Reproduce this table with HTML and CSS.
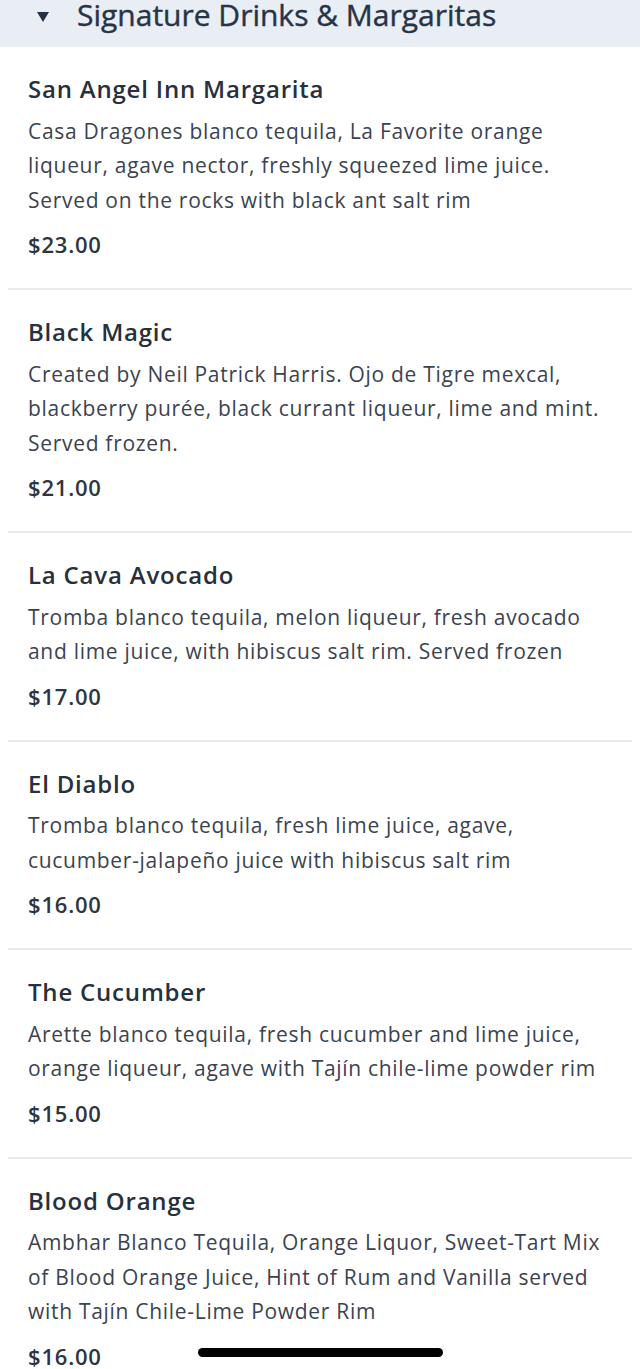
FILE: index.html
```html
<!DOCTYPE html>
<html lang="en">
<head>
    <meta charset="UTF-8">
    <meta name="viewport" content="width=device-width, initial-scale=1.0">
    <title>Signature Drinks &amp; Margaritas</title>
    <link rel="stylesheet" href="styles.css">
</head>
<body>

<div class="section-header">
    <span class="caret"></span>
    <h2>Signature Drinks &amp; Margaritas</h2>
</div>

<div class="menu-list">
    <div class="menu-item">
        <h3>San Angel Inn Margarita</h3>
        <p class="desc">Casa Dragones blanco tequila, La Favorite orange<br>liqueur, agave nector, freshly squeezed lime juice.<br>Served on the rocks with black ant salt rim</p>
        <p class="price">$23.00</p>
    </div>
    <div class="menu-item">
        <h3>Black Magic</h3>
        <p class="desc">Created by Neil Patrick Harris. Ojo de Tigre mexcal,<br>blackberry purée, black currant liqueur, lime and mint.<br>Served frozen.</p>
        <p class="price">$21.00</p>
    </div>
    <div class="menu-item">
        <h3>La Cava Avocado</h3>
        <p class="desc">Tromba blanco tequila, melon liqueur, fresh avocado<br>and lime juice, with hibiscus salt rim. Served frozen</p>
        <p class="price">$17.00</p>
    </div>
    <div class="menu-item">
        <h3>El Diablo</h3>
        <p class="desc">Tromba blanco tequila, fresh lime juice, agave,<br>cucumber-jalapeño juice with hibiscus salt rim</p>
        <p class="price">$16.00</p>
    </div>
    <div class="menu-item">
        <h3>The Cucumber</h3>
        <p class="desc">Arette blanco tequila, fresh cucumber and lime juice,<br>orange liqueur, agave with Tajín chile-lime powder rim</p>
        <p class="price">$15.00</p>
    </div>
    <div class="menu-item">
        <h3>Blood Orange</h3>
        <p class="desc">Ambhar Blanco Tequila, Orange Liquor, Sweet-Tart Mix<br>of Blood Orange Juice, Hint of Rum and Vanilla served<br>with Tajín Chile-Lime Powder Rim</p>
        <p class="price">$16.00</p>
    </div>
</div>

<div class="home-indicator"></div>

</body>
</html>
```

FILE: styles.css
```css
body {
    font-family: "Open Sans", "Liberation Sans", sans-serif;
    margin: 0;
    background-color: #fff;
    color: #2a3240;
    overflow: hidden;
}
.section-header {
    background-color: #e9eef5;
    height: 47px;
    display: flex;
    align-items: flex-start;
    padding-left: 37px;
    box-sizing: border-box;
}
.caret {
    width: 0;
    height: 0;
    border-left: 6px solid transparent;
    border-right: 6px solid transparent;
    border-top: 10px solid #253246;
    margin-top: 12px;
    margin-right: 28px;
}
.section-header h2 {
    margin: 0;
    font-size: 30px;
    line-height: 30px;
    font-weight: 500;
    color: #273447;
    -webkit-text-stroke: 0.4px #273447;
}
.menu-item {
    padding: 27px 20px 29px;
    margin: 0 8px;
    border-bottom: 2px solid #e7e9ec;
}
.menu-item h3 {
    margin: 0;
    font-size: 24px;
    line-height: 30px;
    font-weight: 600;
    letter-spacing: 0.8px;
    color: #28303d;
}
.desc {
    margin: 9.75px 0 0;
    font-size: 21px;
    line-height: 34.5px;
    letter-spacing: 0.7px;
    color: #3b4350;
    white-space: nowrap;
}
.price {
    margin: 11.75px 0 0;
    font-size: 22px;
    line-height: 30px;
    font-weight: 600;
    letter-spacing: 0.8px;
    color: #2d3541;
}
.home-indicator {
    position: absolute;
    left: 198px;
    top: 1348px;
    width: 245px;
    height: 9px;
    border-radius: 5px;
    background-color: #000;
}
```
